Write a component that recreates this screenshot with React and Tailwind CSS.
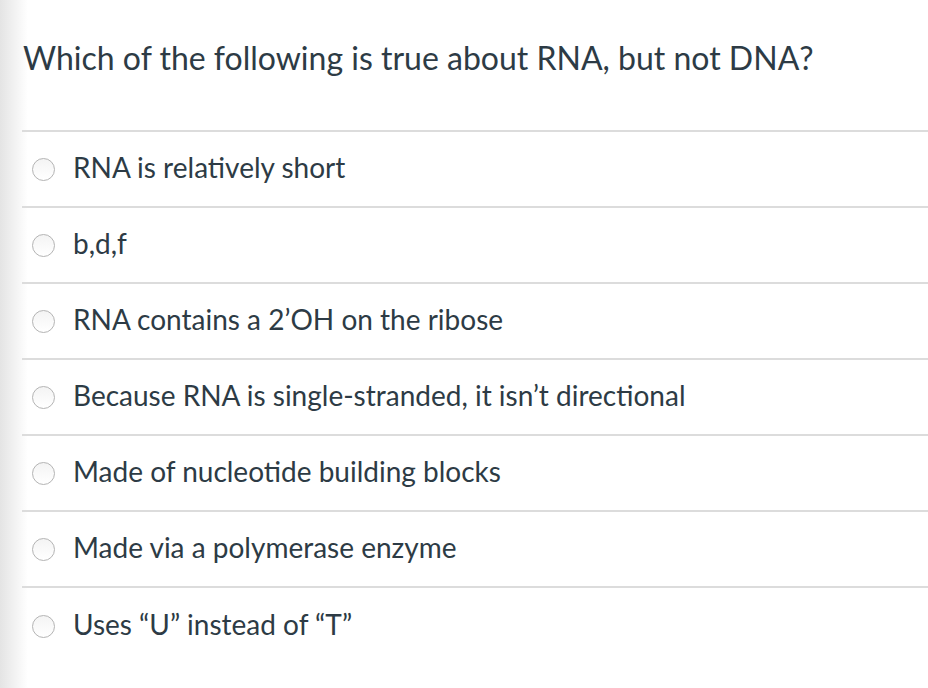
import React from 'react';

const options = [
    'RNA is relatively short',
    'b,d,f',
    'RNA contains a 2\u2019OH on the ribose',
    'Because RNA is single-stranded, it isn\u2019t directional',
    'Made of nucleotide building blocks',
    'Made via a polymerase enzyme',
    'Uses \u201CU\u201D instead of \u201CT\u201D',
];

function Radio() {
    return (
        <span className="block w-[23px] h-[23px] shrink-0 rounded-full border border-[#b4b4b4] bg-gradient-to-b from-[#f4f4f4] to-white" />
    );
}

export default function App() {
    return (
        <div
            className="w-[928px] h-[688px] overflow-hidden bg-white text-[#2d3b45] bg-gradient-to-r from-[#e4e4e4] via-white via-[3%] to-white"
            style={{ fontFamily: 'Lato, "Open Sans", sans-serif' }}
        >
            <div className="pl-[22px] pt-[38px]">
                <h1 className="text-[32px] leading-[40px] pl-[1px]">
                    Which of the following is true about RNA, but not DNA?
                </h1>
                <div className="mt-[52px] border-t-2 border-[#dcdcdc]">
                    {options.map((opt) => (
                        <div key={opt} className="h-[76px] flex items-center border-b-2 border-[#dcdcdc] pl-[10px] gap-[18px] last:border-b-0">
                            <Radio />
                            <span className="text-[28px] leading-[32px] -mt-[5px]">{opt}</span>
                        </div>
                    ))}
                </div>
            </div>
        </div>
    );
}
